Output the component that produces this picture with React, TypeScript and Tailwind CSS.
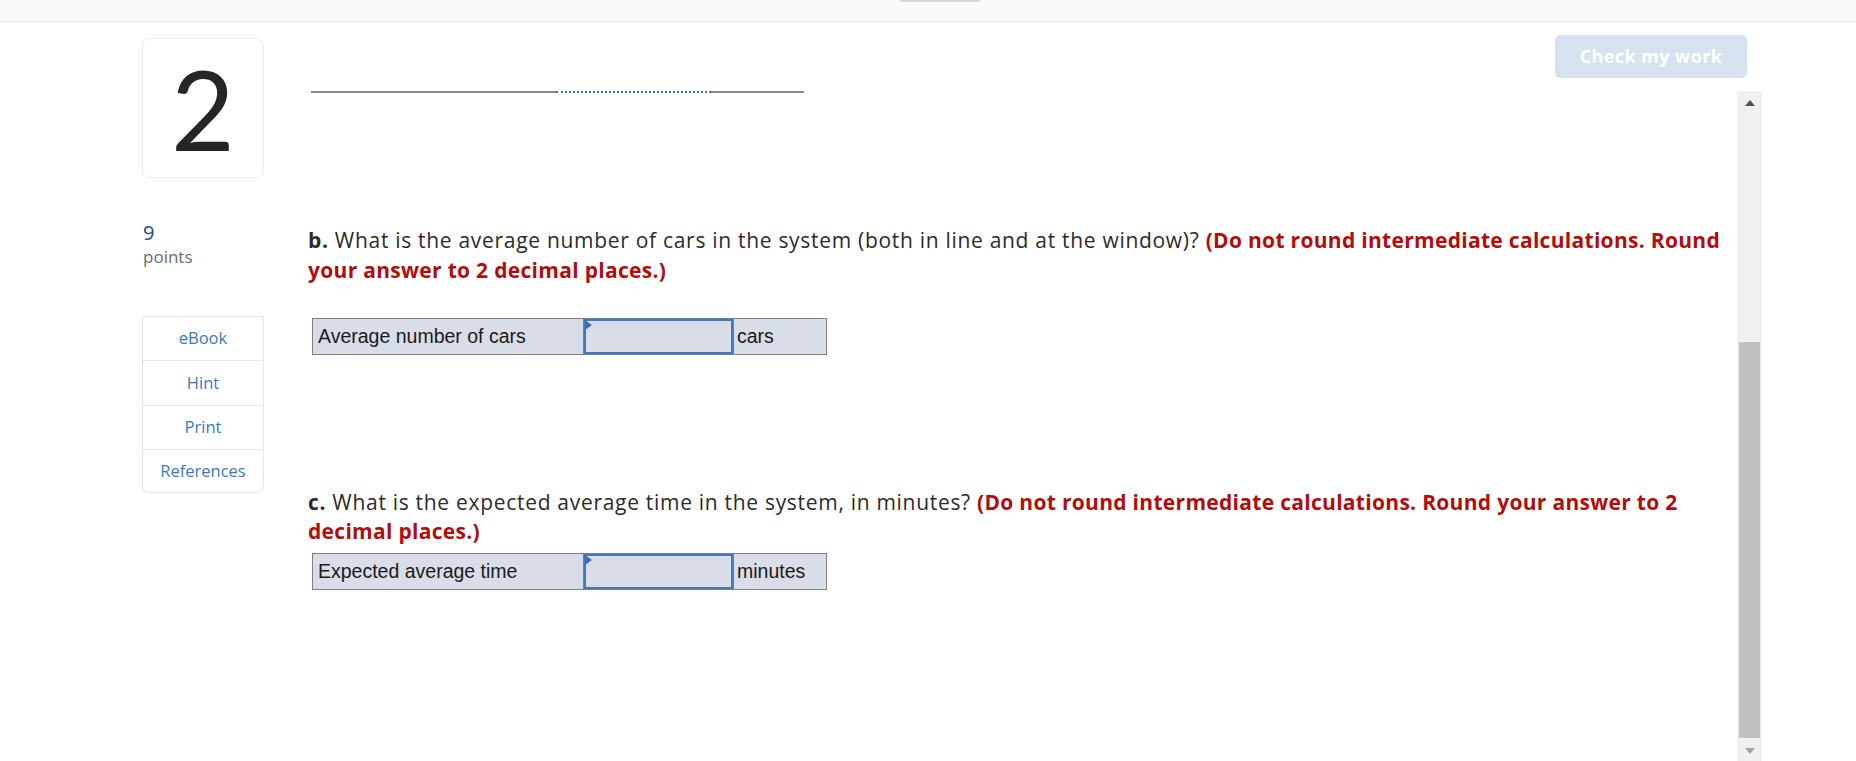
import React from "react";

function AnswerTable({ label, unit }: { label: string; unit: string }) {
  return (
    <div className="flex h-[37px] w-[515px] border border-[#7f7f7f] bg-[#d9dde7] text-[19.5px] text-[#1a1a1a]" style={{ fontFamily: '"Liberation Sans", Arial, sans-serif' }}>
      <div className="flex w-[271px] items-center border-r border-[#7f7f7f] pl-[5px]">{label}</div>
      <div className="relative w-[149px] border-2 border-[#4178c0] bg-[#d9dde7]">
        <svg className="absolute left-[-1px] top-[-1px]" width="8" height="10" viewBox="0 0 8 10">
          <path d="M0 0 L7 5 L0 10 Z" fill="#3a6fb8" />
        </svg>
      </div>
      <div className="flex flex-1 items-center border-l border-[#7f7f7f] pl-[3px]">{unit}</div>
    </div>
  );
}

export default function App() {
  return (
    <div className="relative h-[761px] w-full overflow-hidden bg-white" style={{ fontFamily: '"Open Sans", Lato, sans-serif' }}>
      <div className="relative h-[22px] border-b border-[#e9e9e9] bg-[#fafafa]">
        <div className="absolute left-[900px] top-0 h-[2px] w-[80px] rounded-b bg-[#d6d6d6]" />
      </div>
      <div className="flex">
        <div className="ml-[142px] flex w-[122px] flex-col">
          <div className="mt-[16px] flex h-[140px] w-[122px] items-center justify-center rounded-[7px] border border-[#ececec]">
            <span className="text-[110px] font-normal leading-none text-[#262626]" style={{ fontFamily: 'Lato, sans-serif' }}>2</span>
          </div>
          <div className="mt-[43px] pl-[1px] text-[20px] leading-[24px] text-[#1d4a87]">9</div>
          <div className="mt-[1px] pl-[1px] text-[17px] leading-[22px] text-[#6b6b6b]">points</div>
          <div className="mt-[48px] flex flex-col rounded-b-[7px] border border-[#e6e6e6] text-[16.5px] text-[#3a78c4]">
            <div className="flex h-[44px] items-center justify-center border-b border-[#e6e6e6]">eBook</div>
            <div className="flex h-[45px] items-center justify-center border-b border-[#e6e6e6]">Hint</div>
            <div className="flex h-[44px] items-center justify-center border-b border-[#e6e6e6]">Print</div>
            <div className="flex h-[42px] items-center justify-center">References</div>
          </div>
        </div>
        <div className="ml-[44px] flex flex-1 flex-col pr-[94px]">
          <div className="flex h-[69px] items-start justify-end pr-[15px] pt-[13px]">
            <button className="h-[43px] w-[192px] rounded-[5px] bg-[#d6e2ef] text-[18px] font-bold tracking-[0.4px] text-white">Check my work</button>
          </div>
          <div className="flex h-[670px]">
            <div className="flex-1">
              <div className="ml-[3px] flex h-[2px] w-[493px]">
                <div className="h-[2px] w-[245px] bg-[#8a8a8a]" />
                <div className="h-0 w-[155px] border-t-2 border-dotted border-[#3d7bc6]" />
                <div className="h-[2px] flex-1 bg-[#8a8a8a]" />
              </div>
              <div className="mt-[132px] text-[21px] leading-[30px] text-[#2b2b2b]">
                <div className="whitespace-nowrap tracking-[0.7px]">
                  <span className="font-bold">b.</span> What is the average number of cars in the system (both in line and at the window)?{" "}
                  <span className="font-bold tracking-[0.3px] text-[#b00d0d]">(Do not round intermediate calculations. Round</span>
                </div>
                <div className="whitespace-nowrap font-bold tracking-[0.3px] text-[#b00d0d]">your answer to 2 decimal places.)</div>
              </div>
              <div className="ml-[4px] mt-[33px]">
                <AnswerTable label="Average number of cars" unit="cars" />
              </div>
              <div className="mt-[133px] text-[21px] leading-[29px] text-[#2b2b2b]">
                <div className="whitespace-nowrap tracking-[0.7px]">
                  <span className="font-bold">c.</span> What is the expected average time in the system, in minutes?{" "}
                  <span className="font-bold tracking-[0.3px] text-[#b00d0d]">(Do not round intermediate calculations. Round your answer to 2</span>
                </div>
                <div className="whitespace-nowrap font-bold tracking-[0.3px] text-[#b00d0d]">decimal places.)</div>
              </div>
              <div className="ml-[4px] mt-[7px]">
                <AnswerTable label="Expected average time" unit="minutes" />
              </div>
            </div>
            <div className="flex w-[25px] flex-col items-center bg-[#f0f0f0]">
              <svg className="mt-[9px]" width="10" height="6" viewBox="0 0 10 6">
                <path d="M0 6 L5 0 L10 6 Z" fill="#505050" />
              </svg>
              <div className="mt-[236px] h-[396px] w-[21px] bg-[#c1c1c1]" />
              <svg className="mt-[10px]" width="10" height="6" viewBox="0 0 10 6">
                <path d="M0 0 L5 6 L10 0 Z" fill="#a3a3a3" />
              </svg>
            </div>
          </div>
        </div>
      </div>
    </div>
  );
}
